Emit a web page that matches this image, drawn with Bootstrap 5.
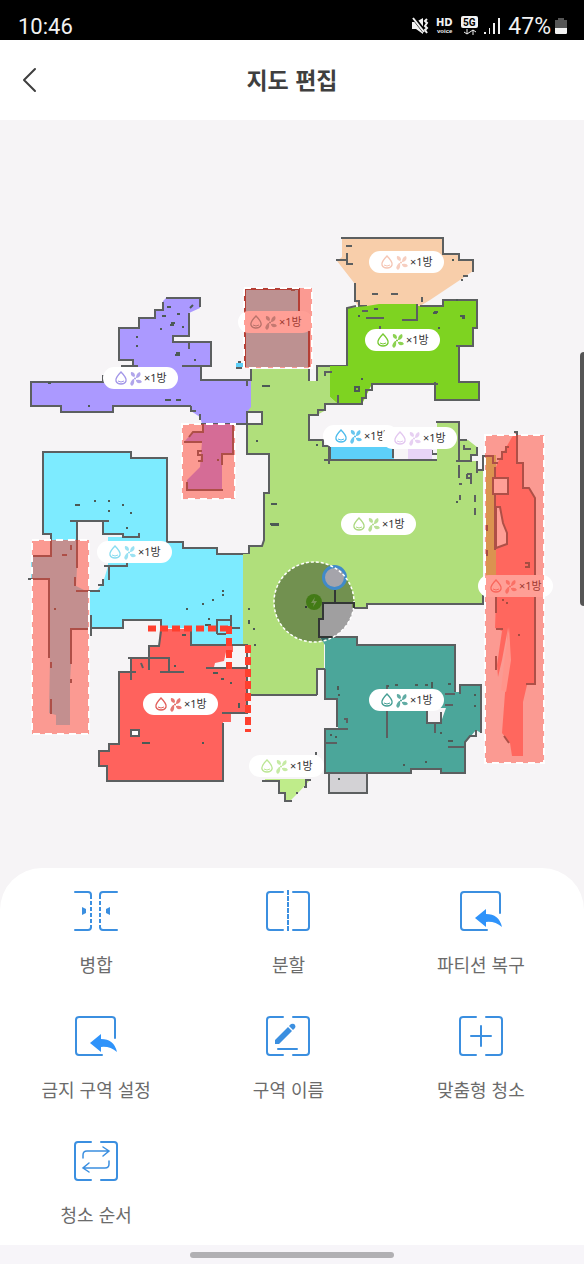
<!DOCTYPE html>
<html lang="ko">
<head>
<meta charset="utf-8">
<meta name="viewport" content="width=device-width, initial-scale=1">
<title>지도 편집</title>
<link href="https://cdn.jsdelivr.net/npm/bootstrap@5.3.0/dist/css/bootstrap.min.css" rel="stylesheet">
<style>
  body { background: #f6f4f6; font-family: "Noto Sans CJK KR", sans-serif; color: #3f3f3f; }
  .status-bar { height: 40px; padding: 12px 17px 0 18px; background: #000; color: #f2f2f2; font: 22px/30px Roboto, sans-serif; }
  .status-bar svg { display: block; }
  .battery-level { font-size: 23px; }
  .app-header { height: 80px; padding-bottom: 2px; }
  .app-header h1 { font-size: 23px; line-height: 32px; font-weight: 700; }
  .back-btn { width: 58px; height: 78px; color: #3f3f3f; border: 0; border-radius: 0; }
  .map-view svg { display: block; width: 100%; height: auto; }
  .edge-handle { top: 31%; right: 0; width: 4px; height: 34%; background: #555; border-radius: 4px 0 0 4px; }
  .wall { stroke: #5c5f60; stroke-width: 2; fill: none; }
  .speck { stroke: #4c5a55; stroke-width: 2; fill: none; }
  .zone { fill: #ff402d; fill-opacity: .5; stroke: #fff; stroke-width: 2; stroke-dasharray: 7 5; }
  .room-tag { font-family: "Noto Sans", "Noto Sans CJK KR", sans-serif; font-size: 11px; fill: #333; }
  .tool-sheet { padding: 22px 7px 0 0; border-radius: 42px 42px 0 0; }
  .tool-grid { row-gap: 20px; }
  .tool-btn { padding: 0 0 19px; gap: 18px; border: 0; border-radius: 0; font-size: 18px; line-height: 24px; color: #6b6b6b; }
  .tool-btn svg { width: 44px; height: 44px; stroke: #3b8fe0; stroke-width: 2; fill: none; stroke-linecap: round; }
  .home-strip { height: 19px; background: #f7f5f9; }
  .home-bar { width: 35%; height: 6px; background: #b1b0b3; }
</style>
</head>
<body>
<div class="status-bar d-flex justify-content-between">
  <span>10:46</span>
  <div class="d-flex">
    <svg width="97" height="24" viewBox="0 0 97 24" fill="#f2f2f2" aria-hidden="true">
      <path d="M1 10h4l7-4v16l-7-5H1z"/><path d="M2 5 13 19" stroke="#000" stroke-width="4"/><path d="M2 6 13 20" stroke="#f2f2f2" stroke-width="2"/>
      <path d="m16 7-2 2 2 2-2 3 2 2-2 2 2 3" stroke="#f2f2f2" stroke-width="2" fill="none"/>
      <text x="25" y="14" font-size="10" font-weight="700" font-family="DejaVu Sans">HD</text>
      <text x="26" y="21" font-size="6" font-weight="700" font-family="Liberation Sans">voice</text>
      <rect x="50" y="4" width="17" height="12" rx="2"/><text x="52" y="14" font-size="10" font-weight="700" font-family="Roboto" fill="#000">5G</text>
      <path d="M56 17v5m-3-2 3 2 3-2M62 23v-5m-3 2 3-2 3 2" stroke="#f2f2f2" fill="none"/>
      <path d="M73 20h2v2h-2zm5-4h1v6h-1zm4-5h2v11h-2zm5-5h2v16h-2z"/>
    </svg>
    <span class="battery-level">47%</span>
    <svg class="ms-1" width="12" height="24" viewBox="0 0 12 24" aria-hidden="true"><path fill="#555" d="M3 6h6v2h3v14H0V8h3z"/><path fill="#f2f2f2" d="M0 16h12v5l-1 1H1l-1-1z"/></svg>
  </div>
</div>

<header class="app-header bg-white position-relative d-flex align-items-center justify-content-center">
  <button type="button" class="btn back-btn position-absolute start-0 top-0 p-0" aria-label="뒤로">
    <svg width="16" height="26" viewBox="0 0 16 26" fill="none" stroke="currentColor" stroke-width="2" stroke-linecap="round" stroke-linejoin="round"><path d="M14 2 3 13l11 11"/></svg>
  </button>
  <h1 class="m-0">지도 편집</h1>
</header>

<main class="map-view position-relative">
<svg viewBox="0 120 584 748" role="img" aria-label="청소 지도">
  <defs>
    <g id="tagShape">
      <rect width="75" height="22" rx="11" fill="#fff"/>
      <g fill="none" stroke="currentColor" stroke-width="1.4">
        <path d="M18 5q-6 6-5 9 1 3 5 3t5-3q1-3-5-9z"/><path d="M15 14q3 2 6 0" stroke-width="1"/>
      </g>
      <g fill="currentColor">
        <path d="M31 10q-4-1-3-5 4 0 4 4zM33 11q0-5 4-6 2 4-3 6zM33 13q5-1 6 2-4 3-6-1zM31 12q1 5-2 7-4-2 1-7z" opacity=".85"/>
        <circle cx="32" cy="11.500" r="1"/>
      </g>
    </g>
  </defs>

  <!-- rooms -->
  <g class="wall">
    <path fill="#ab99ff" stroke="none" d="M166 298H200V308L189 313V336H173V342H211V366H201V380H251V412H247V424H202L200 417 191 411V406H113V412H61V406H31V382H103L133 366V360H119V328H139V318H155V310H163V301z"/>
    <path d="M166 298H200V307M189 313V336H173V342H211V366H201M182 366H201V380H251M191 406H113V412H61V406H31V382H103V375M121 366H138M133 366V360H119V328H139V318H155V310H163V302M191 406V411H196M200 414V420M201 424H247V412M189 342V349M247 380V386"/>
    <path fill="#7debff" stroke="none" d="M43 452H131V458H167V542H183V548H217V554H243V645H191V628H161V620H123V628H90V592H96L103 583 108 566V537H123V534H103V521H77V540H51V534H43z"/>
    <path d="M51 556V534H43V452H131V458H167V542H183V548H217V554H249M70 521H109M77 521V568M103 521V534H123V537H139V533M104 566H127V562M109 566V580M98 585H103V579M90 591H100M91 615V636M91 628H123V620H161V635M217 634V620H231M231 615V630M217 634H226M231 628H240"/>
    <path fill="#b0df7b" stroke="none" d="M251 369H310V381H317V366H330V397L338 404H326V410L317 415H309V440H323V446H329V460H437V422H459V440H468L477 447V455H471V461H477V470H483V604H367V608H323V619H319V637L324 643V669H317V695H250V645H243V554H249V546H262L264 542V493H269V454H247V412L251 407z"/>
    <path fill="#f6f4f6" stroke="none" d="M247 412H262V424H247zM310 381H317V370H310z"/>
    <path d="M251 366V381M309 369V381M317 381V366H347M338 404H325V410H318V415H309V440H323V446H329V464M324 460H437M409 460V450M432 450V454H437M436 422H459V461M459 440H467M464 445V449H471M477 447V455H471V461H456M477 461V473M483 455V470H477M483 595V604H367V608H354M317 695V669H325M317 695H248M249 554V546H262L264 540V493H269V454H247V412H262V424H247M459 465V478M467 474H471V478H467V474M471 478V484M459 484H462M475 495V502M475 508V515M460 495V500"/>
    <path fill="#f8ceaa" stroke="none" d="M342 238H443V254H459V260H473V271L460 280 430 300 420 306H358L355 301V284L337 261 342 257z"/>
    <path d="M341 238H443V254H459V260H473V272M463 276H468M336 260H347V253M347 260V264H353M346 246H352M355 283V301H359V306H367M372 294H378M391 294H398M422 297V302M443 306H425M461 280H463"/>
    <path fill="#7ed321" stroke="none" d="M347 308 367 306 379 304H417V306H443V300H477V328H473V346H459V382H479V400H435V384H372L362 404H338L330 397V366H347z"/>
    <path d="M356 306 347 308V366M424 306H443V300H477V328H473V346H456M459 346V382H479V400H435V382M438 384H372V390H366V398H362V404H338M366 318H384M402 320H417V304M338 404V395M362 311H368M420 306H426M380 326V329M325 376V372H332"/>
    <path fill="#5dd0f9" stroke="none" d="M330 447H394V459H330z"/><path d="M393 458V448M330 447V459"/>
    <path fill="#e8d4f6" stroke="none" d="M408 447H432V459H408z"/>
    <path fill="#ff625d" stroke="none" d="M160 629H191V645H233V652H226L224 661 215 663 214 667H247V713H231V722H223V781H107V766H99V751H109V744H119V672H130V658H149V646H159z"/>
    <path d="M161 631 159 646H149V670M128 658H169V672M131 658V680M191 630V645H247V713H222M118 672H136M160 672H184M119 672V744H109V751H99V766H107V781H223V723M206 668H248M141 663 143 668"/>
    <path fill="#fff" d="M131 730H139V736H131z"/>
    <path fill="#4ba69a" stroke="none" d="M320 637H357V645H455V692H460V685H481V733L476 730 466 742V773H441V769H411V773H325V729H338V699H325V645z"/>
    <path d="M319 637H357V645H455V692M460 694V685H481V733M476 730V736H470L465 742V773H441V769H411V773H325V729H348M337 727V699H325V669M387 685V738M325 743H337M448 747H465M344 719H347V723M445 694H455M445 705H453"/>
    <path fill="#f6f4f6" stroke="none" d="M427 708H446L441 722 427 723z"/><path d="M427 711V723H441V712M435 723V733"/>
    <rect x="329" y="773" width="38" height="20" fill="#d3d2d5"/>
    <path fill="#bfec8a" stroke="none" d="M265 779H311L298 793 290 801 285 800V793H279V781H265z"/>
    <path d="M262 781H279V793H285V801H292M311 780H306V787H304M296 793H298M316 752V755"/>
    <path fill="#7be2f5" stroke="none" d="M245 289H299V330H309V367H245z"/><path stroke="#6b3d3d" d="M245 367V289H299V311M309 331V367"/>
    <path fill="#5dd0f9" stroke="none" d="M236 363H244V367H236z"/><path d="M236 368H242M238 362H241"/>
    <path fill="#ab99ff" stroke="none" d="M203 424H233V454H222V490H187V480L200 467 202 442H184L192 433 203 431z"/>
    <path d="M203 424V432H193L189 437M184 442H202M202 451H198V455H202V461H198M233 424V454H222V465M187 482V490H223"/>
    <path fill="#86dff0" stroke="none" d="M51 540H77V568L76 586 88 592V629H71V663L70 682V725H56V715L49 713 50 658 49 579H31V556H51z"/>
    <path d="M51 540V556H31M28 579H49V658M77 540V568M75 577V586M76 591H90M88 629H71V664M67 555H62M71 550V545M51 662V668M51 699V714M71 679V683"/>
    <path fill="#b7e673" stroke="none" d="M486 455H496V594H486z"/>
    <path fill="#ff8f8e" stroke="none" d="M512 437 516 432 517 463H523V488H529L535 498V684L527 685 523 702V756H512L510 743 502 733 505 693 508 628 502 660 498 677 497 665 502 631 495 628 496 598V467L498 462z"/>
    <path d="M514 432H517V463H523V488H529L535 498V684H526M509 447H506V452H502V459H497M484 456H493V463H498M495 467V550M496 597V613M496 629H503M496 656V670M535 594V684M504 736 509 743"/>
    <path fill="#fff" d="M493 478H508V494H493z"/><path fill="#fff" d="M496 507H500L503 523 507 533V544L496 548z"/>
    <path fill="#ffe9e7" stroke="none" d="M509 627 505 655 501 690 506 692 511 660z"/>
  </g>

  <!-- obstacles -->
  <path class="speck" d="M167 307h4M162 316h4M177 314h3M170 325h4M171 323h4M160 329h2M182 327h2M190 308l3-3M136 337h2M136 346h2M175 355h5M176 353h4M194 360h2M48 383h3M165 400h6M176 400h5M88 406h2M75 505h5M94 501h2M108 501h2M122 505h2M108 511h2M130 513h2M126 528h2M222 591h2M222 595h2M212 600h2M202 604h2M186 609h2M208 619h2M205 625h6M248 609h2M248 621h2M248 623h2M253 629h2M254 645h2M182 635h4M174 666h2M213 673h5M221 679h3M230 683h2M239 703v5M142 743h8M202 743h2M262 386h8M271 504h6M270 524h9M271 525h8M256 441h2M316 445h2M305 607h2M374 309h4M358 316h2M433 313h4M434 312h4M460 316h5M462 318h3M438 328h2M355 387h4v4h-4zM361 379h2M456 300h2M452 260h2M456 502h2M338 686v4M338 695h2M387 686h2M395 685h3M415 685h3M425 685h3M432 682v6M448 684h3M474 695h2M474 706h2M330 735h2M335 737h2M448 741h5M440 733h2M403 765h2M425 762h2M338 779h2M291 290h4M217 460h2M54 609h2M502 600h2M506 603h2M518 635h2M525 563h4v4h-4M487 525v6M487 550v6"/>
  <path d="M148 628.500H231" fill="none" stroke="#ff3f2e" stroke-width="6" stroke-dasharray="8 4"/>
  <path d="M229 626V669M248 645V732" fill="none" stroke="#ff3f2e" stroke-width="6" stroke-dasharray="8 4"/>

  <!-- room labels -->
  <g class="room-tag">
    <g transform="translate(369 251)" color="#f5c6b5"><use href="#tagShape"/><text x="41" y="15">×1방</text></g>
    <g transform="translate(238 311)" color="#74a6a8"><use href="#tagShape"/><text x="41" y="15">×1방</text></g>
    <g transform="translate(365 329)" color="#78ca33"><use href="#tagShape"/><text x="41" y="15">×1방</text></g>
    <g transform="translate(103 367)" color="#a397e8"><use href="#tagShape"/><text x="41" y="15">×1방</text></g>
    <g transform="translate(323 425)" color="#4dbcec"><use href="#tagShape"/><text x="41" y="15">×1방</text></g>
    <g transform="translate(382 427)" color="#e3c8f0"><use href="#tagShape"/><text x="41" y="15">×1방</text></g>
    <g transform="translate(341 513)" color="#add982"><use href="#tagShape"/><text x="41" y="15">×1방</text></g>
    <g transform="translate(97 541)" color="#8adcf0"><use href="#tagShape"/><text x="41" y="15">×1방</text></g>
    <g transform="translate(143 693)" color="#e2605c"><use href="#tagShape"/><text x="41" y="15">×1방</text></g>
    <g transform="translate(369 689)" color="#459e94"><use href="#tagShape"/><text x="41" y="15">×1방</text></g>
    <g transform="translate(249 755)" color="#bce695"><use href="#tagShape"/><text x="41" y="15">×1방</text></g>
    <g transform="translate(478 575)" color="#f38f8c"><use href="#tagShape"/><text x="41" y="15">×1방</text></g>
  </g>

  <!-- no-go zones -->
  <g class="zone">
    <rect x="244" y="288" width="68" height="80"/>
    <rect x="182" y="424" width="53" height="75"/>
    <rect x="32" y="540" width="57" height="194"/>
    <rect x="485" y="435" width="59" height="328"/>
  </g>

  <!-- robot and dock -->
  <path d="M322 604H352Q352 624 335 636L319 637V619H323z" fill="#f6f4f6"/>
  <circle cx="314" cy="602" r="8" fill="#67bd22"/>
  <path d="m315 597-4 6h3l-1 4 4-6h-3z" fill="#b9e388"/>
  <circle cx="314" cy="602" r="40" fill="#000" fill-opacity=".35"/>
  <circle cx="334.500" cy="577.500" r="11" fill="#a5a4ab" stroke="#418ac9" stroke-width="3"/>
  <circle cx="314" cy="602" r="40" fill="none" stroke="#fff" stroke-width="1.500" stroke-dasharray="3 2"/>
  <path d="M335 590V603M354 608V603H323V619H319V637H332" fill="none" stroke="#333635" stroke-width="2"/>
</svg>
<div class="edge-handle position-absolute"></div>
</main>

<section class="tool-sheet bg-white">
  <div class="tool-grid row row-cols-3 g-0">
    <button type="button" class="btn tool-btn col d-flex flex-column align-items-center">
      <svg viewBox="0 0 44 44"><path d="M1 2H14q3 0 3 3M17 37q0 3-3 3H1M43 2H29q-3 0-3 3M26 37q0 3 3 3H43"/><path stroke-linecap="butt" stroke-dasharray="4 2" d="M17 5V38M26 5V38"/><path fill="#3b8fe0" stroke="none" d="M8 17 12 19V23L8 25zM36 17 32 19V23L36 25z"/></svg>
      <span>병합</span></button>
    <button type="button" class="btn tool-btn col d-flex flex-column align-items-center">
      <svg viewBox="0 0 44 44"><path d="M17 2H4q-3 0-3 3V37q0 3 3 3H17M27 2H40q3 0 3 3V37q0 3-3 3H27"/><path stroke-linecap="butt" stroke-dasharray="5 1" d="M22 0V42"/></svg>
      <span>분할</span></button>
    <button type="button" class="btn tool-btn col d-flex flex-column align-items-center">
      <svg viewBox="0 0 44 44"><path d="M41 23V5q0-3-3-3H5Q2 2 2 5V37q0 3 3 3H28"/><path fill="#2f93fa" stroke="none" d="M16 28 27 19V24Q40 24 43 37 36 31 27 32V37z"/></svg>
      <span>파티션 복구</span></button>
    <button type="button" class="btn tool-btn col d-flex flex-column align-items-center">
      <svg viewBox="0 0 44 44"><path d="M41 23V5q0-3-3-3H5Q2 2 2 5V37q0 3 3 3H28"/><path fill="#2f93fa" stroke="none" d="M16 28 27 19V24Q40 24 43 37 36 31 27 32V37z"/></svg>
      <span>금지 구역 설정</span></button>
    <button type="button" class="btn tool-btn col d-flex flex-column align-items-center">
      <svg viewBox="0 0 44 44"><path d="M17 2H4q-3 0-3 3V37q0 3 3 3H17M27 2H40q3 0 3 3V37q0 3-3 3H27M12 34H31"/><path fill="#3b8fe0" stroke="none" d="M9 29V25L22 12 26 16 13 29zM23 11 25 9Q28 8 29 10 30 12 29 13L27 15z"/></svg>
      <span>구역 이름</span></button>
    <button type="button" class="btn tool-btn col d-flex flex-column align-items-center">
      <svg viewBox="0 0 44 44"><path d="M17 2H4q-3 0-3 3V37q0 3 3 3H17M27 2H40q3 0 3 3V37q0 3-3 3H27M12 21H32M22 11V31"/></svg>
      <span>맞춤형 청소</span></button>
    <button type="button" class="btn tool-btn col d-flex flex-column align-items-center">
      <svg viewBox="0 0 44 44"><path d="M17 2H4q-3 0-3 3V37q0 3 3 3H17M27 2H40q3 0 3 3V37q0 3-3 3H27"/><path stroke-width="1.500" d="M9 18V15q0-4 4-4H35M29 7 35 11 29 16M35 21V24q0 4-4 4H9M15 23 9 28 15 32"/></svg>
      <span>청소 순서</span></button>
  </div>
</section>
<div class="home-strip d-flex align-items-center justify-content-center"><div class="home-bar rounded-pill"></div></div>
<script src="https://cdn.jsdelivr.net/npm/bootstrap@5.3.0/dist/js/bootstrap.bundle.min.js"></script>
</body>
</html>
